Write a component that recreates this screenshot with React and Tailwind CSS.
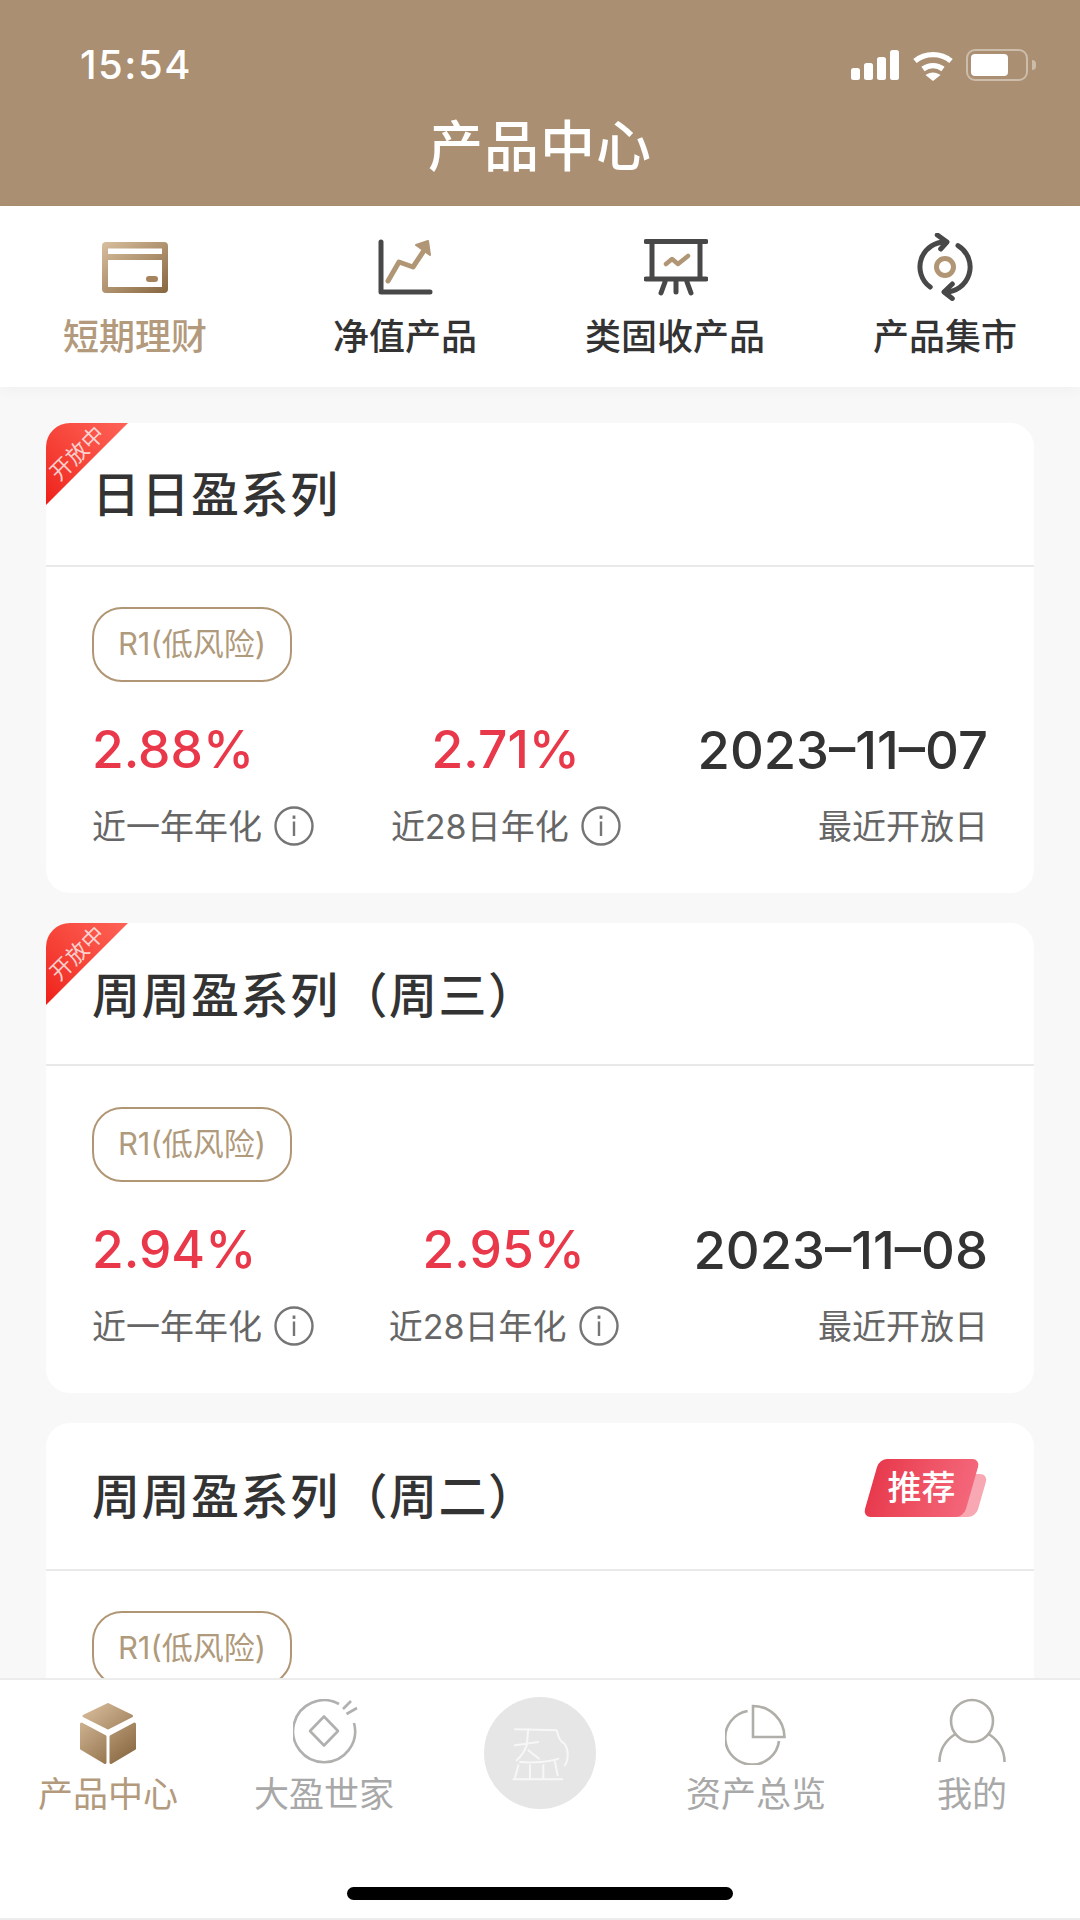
import React from "react";

const FONT = 'Inter, "Noto Sans CJK SC", sans-serif';

const WalletIcon = () => (
  <svg width="66" height="51" viewBox="0 0 66 51">
    <defs>
      <linearGradient id="gold1" x1="0" y1="0" x2="1" y2="1">
        <stop offset="0" stopColor="#d9bf9f" />
        <stop offset="1" stopColor="#86663f" />
      </linearGradient>
    </defs>
    <path
      fillRule="evenodd"
      fill="url(#gold1)"
      d="M4 0H62A4 4 0 0 1 66 4V47A4 4 0 0 1 62 51H4A4 4 0 0 1 0 47V4A4 4 0 0 1 4 0ZM6 6.5V12H60V6.5ZM6 18V45H60V18Z"
    />
    <rect x="44" y="34" width="12" height="6" rx="3" fill="#a5835c" />
  </svg>
);

const ChartIcon = () => (
  <svg width="56" height="56" viewBox="0 0 56 56" fill="none" strokeLinecap="round" strokeLinejoin="round">
    <path d="M4 3V53H53" stroke="#484848" strokeWidth="5" />
    <path d="M11 42L22 23L36 28L46 13" stroke="#b09674" strokeWidth="5" />
    <path d="M39 6L51 2L53 16Z" fill="#b09674" stroke="#b09674" strokeWidth="2" />
  </svg>
);

const BoardIcon = () => (
  <svg className="ml-[2px]" width="64" height="58" viewBox="0 0 64 58" fill="none" strokeLinecap="round" strokeLinejoin="round">
    <path d="M2 3.5H62M2 41H62M8 4V41M56 4V41M21 44L17 55M32 44V54M43 44L47 55" stroke="#484848" strokeWidth="5" />
    <path d="M22 26L28 21L34 26L44 18" stroke="#b09674" strokeWidth="4.5" />
  </svg>
);

const CycleIcon = () => (
  <svg width="56" height="68" viewBox="0 0 56 68" fill="none" strokeLinecap="round" strokeLinejoin="round">
    <path
      d="M13.2 54.1A25 25 0 0 1 30 9M20.3 2L30 9L23.7 16M41 12.6A25 25 0 0 1 27 59M35.3 51L27 59L35.3 65.5"
      stroke="#484848"
      strokeWidth="5"
    />
    <circle cx="28" cy="34" r="8.5" stroke="#b09674" strokeWidth="5" />
  </svg>
);

const InfoIcon = () => (
  <svg width="40" height="40" viewBox="0 0 40 40" fill="none">
    <circle cx="20" cy="20" r="18.5" stroke="#757575" strokeWidth="2.4" />
    <rect x="18.6" y="9.5" width="2.8" height="3.4" fill="#757575" />
    <rect x="18.8" y="15.5" width="2.4" height="14.5" fill="#757575" />
  </svg>
);

const BoxIcon = () => (
  <svg width="56" height="63" viewBox="0 0 56 63">
    <defs>
      <linearGradient id="gold2" gradientUnits="userSpaceOnUse" x1="4" y1="4" x2="52" y2="60">
        <stop offset="0" stopColor="#d8bc9b" />
        <stop offset="1" stopColor="#86663f" />
      </linearGradient>
    </defs>
    <g fill="url(#gold2)" stroke="url(#gold2)" strokeWidth="3" strokeLinejoin="round">
      <path d="M28 2.5L51.5 14L28 26L4 14Z" />
      <path d="M1.5 22L25 34.5V60.5L1.5 46.5Z" />
      <path d="M54.5 22L31 34.5V60.5L54.5 46.5Z" />
    </g>
  </svg>
);

const CoinIcon = () => (
  <svg className="ml-[4px]" width="66" height="66" viewBox="0 0 66 66" fill="none" stroke="#b0b0ae" strokeWidth="2.6" strokeLinejoin="round">
    <path d="M46 5A31 31 0 1 0 61 24" />
    <path d="M31 17.5L45 32L31 46.5L17 32Z" />
    <path d="M50 10L58 2M53.5 15L64 9" />
  </svg>
);

const PieIcon = () => (
  <svg width="62" height="62" viewBox="0 0 62 62" fill="none" stroke="#b0aea8" strokeWidth="2.6">
    <path d="M28 3V34H59.5A31.5 31.5 0 0 0 28 3Z" />
    <path d="M22.6 8A27 27 0 1 0 54 38" />
  </svg>
);

const PersonIcon = () => (
  <svg width="68" height="68" viewBox="0 0 68 68" fill="none" stroke="#b0aea8" strokeWidth="2.6">
    <circle cx="34" cy="24" r="21" />
    <path d="M1.5 65C1.5 52 8 43 17.5 37M66.5 65C66.5 52 60 43 50.5 37" />
  </svg>
);

// brand mark in the middle of the tab bar
const LogoMark = () => (
  <svg width="112" height="112" viewBox="27 20 336 336" fill="none" stroke="#f7f7f7" strokeWidth="6" strokeLinecap="round" strokeLinejoin="round">
    <circle cx="195" cy="188" r="168" fill="#e6e6e6" stroke="none" />
    <path d="M120 117L245 120C250 135 250 150 268 160C280 175 282 205 270 225" />
    <path d="M120 165L190 155M160 115L155 165C148 185 138 198 125 210M160 180L192 205" />
    <path d="M135 215C175 218 225 215 250 205M130 225L120 262M165 225V265M205 225V265M240 215L248 255M115 267H262" />
  </svg>
);

const StatusIcons = () => (
  <div className="flex items-center">
    <svg width="48" height="30" viewBox="0 0 48 30" fill="#fff">
      <rect x="0" y="18" width="9" height="12" rx="2.5" />
      <rect x="13" y="13" width="9" height="17" rx="2.5" />
      <rect x="26" y="7" width="9" height="23" rx="2.5" />
      <rect x="39" y="0" width="9" height="30" rx="2.5" />
    </svg>
    <svg className="ml-[13px]" width="42" height="31" viewBox="0 0 42 31" fill="none" stroke="#fff" strokeWidth="5.4">
      <path d="M3 11C13 2.5 29 2.5 39 11" />
      <path d="M11 19C17 14.5 25 14.5 31 19" />
      <path d="M21 31L13.5 25C18 21.5 24 21.5 28.5 25Z" fill="#fff" stroke="none" />
    </svg>
    <div className="ml-[12px] flex items-center">
      <div className="w-[62px] h-[32px] rounded-[9px] border-2 border-white/40 p-[3px]">
        <div className="w-[37px] h-full rounded-[4px] bg-white" />
      </div>
      <div className="ml-[4px] w-[4px] h-[10px] rounded-r-full bg-white/40" />
    </div>
  </div>
);

const tabs = [
  { label: "短期理财", icon: <WalletIcon />, active: true },
  { label: "净值产品", icon: <ChartIcon /> },
  { label: "类固收产品", icon: <BoardIcon /> },
  { label: "产品集市", icon: <CycleIcon /> },
];

const cards = [
  { title: "日日盈系列", open: true, rate1: "2.88%", rate2: "2.71%", date: "2023–11–07", headerH: "h-[142px] pt-[1px]", bodyH: "h-[326px] pt-[40px]" },
  { title: "周周盈系列（周三）", open: true, rate1: "2.94%", rate2: "2.95%", date: "2023–11–08", headerH: "h-[141px] pt-[4px]", bodyH: "h-[327px] pt-[41px]" },
  { title: "周周盈系列（周二）", hot: true, headerH: "h-[146px] pt-[2px]", bodyH: "h-[325px] pt-[40px]" },
];

const navItems = [
  { label: "产品中心", icon: <BoxIcon />, active: true },
  { label: "大盈世家", icon: <CoinIcon /> },
  { center: true },
  { label: "资产总览", icon: <PieIcon /> },
  { label: "我的", icon: <PersonIcon /> },
];

const Card = ({ card }) => (
  <div className="relative shrink-0 bg-white rounded-[24px] overflow-hidden">
    {card.open && (
      <>
        <div className="absolute left-0 top-0 w-[82px] h-[82px] bg-gradient-to-tr from-[#ee1c17] to-[#ff6257] [clip-path:polygon(0_0,100%_0,0_100%)]" />
        <span className="absolute left-[-2px] top-[20px] w-[66px] text-center text-[22px] leading-[20px] whitespace-nowrap text-white/75 -rotate-45">
          开放中
        </span>
      </>
    )}
    <div className={`${card.headerH} pl-[46px] pr-[46px] flex items-center justify-between`}>
      <span className="text-[48px] leading-[60px] tracking-[1.5px] font-medium text-[#333]">{card.title}</span>
      {card.hot && (
        <div className="relative w-[124px] h-[58px] mt-[-19px]">
          <div className="absolute right-[6px] bottom-0 w-[62px] h-[43px] rounded-[8px] bg-[#f8a8b3] -skew-x-[16deg]" />
          <div className="absolute left-[7px] top-0 w-[101px] h-[58px] rounded-[8px] bg-gradient-to-r from-[#e8394d] to-[#f4667a] -skew-x-[16deg]" />
          <span className="absolute left-[7px] top-0 w-[101px] h-[58px] flex items-center justify-center text-[34px] font-medium text-white">
            推荐
          </span>
        </div>
      )}
    </div>
    <div className="h-[2px] bg-[#e9e9e9]" />
    <div className={`${card.bodyH} pl-[46px] pr-[46px]`}>
      <div className="w-[200px] h-[75px] rounded-[30px] border-2 border-[#b09674] flex items-center justify-center text-[31px] text-[#b09a7c]">
        R1(低风险)
      </div>
      {card.date && (
        <div className="mt-[38px] flex justify-between">
          <div>
            <div className="h-[60px] flex items-center text-[51.5px] font-medium text-[#e8384a]">{card.rate1}</div>
            <div className="mt-[21px] h-[50px] flex items-center text-[34px] text-[#666]">
              近一年年化
              <span className="ml-[12px]"><InfoIcon /></span>
            </div>
          </div>
          <div>
            <div className="h-[60px] flex items-center justify-center text-[51.5px] font-medium text-[#e8384a]">{card.rate2}</div>
            <div className="mt-[21px] h-[50px] flex items-center text-[34px] text-[#666]">
              近28日年化
              <span className="ml-[12px]"><InfoIcon /></span>
            </div>
          </div>
          <div className="text-right">
            <div className="h-[60px] flex items-center justify-end text-[52.5px] font-medium text-[#333]">{card.date}</div>
            <div className="mt-[21px] h-[50px] flex items-center justify-end text-[34px] text-[#666]">最近开放日</div>
          </div>
        </div>
      )}
    </div>
  </div>
);

export default function App() {
  return (
    <div className="w-[1080px] h-[1920px] flex flex-col bg-[#f8f8f8] overflow-hidden" style={{ fontFamily: FONT }}>
      <div className="h-[206px] shrink-0 bg-[#aa8f72] pt-[40px] text-white">
        <div className="h-[50px] pl-[80px] pr-[44px] flex items-center justify-between">
          <span className="text-[40px] font-medium tracking-[1.5px]">15:54</span>
          <StatusIcons />
        </div>
        <div className="h-[110px] pt-[2px] flex items-center justify-center text-[55px] font-medium tracking-[1px]">产品中心</div>
      </div>

      <div className="h-[181px] shrink-0 bg-white grid grid-cols-4 pt-[26px] shadow-[0_4px_14px_rgba(0,0,0,0.03)] relative">
        {tabs.map((tab) => (
          <div key={tab.label} className="flex flex-col items-center">
            <div className="h-[70px] flex items-center justify-center">{tab.icon}</div>
            <div className={`mt-[10px] h-[50px] flex items-center text-[36px] font-medium ${tab.active ? "text-[#b39a7c]" : "text-[#333]"}`}>
              {tab.label}
            </div>
          </div>
        ))}
      </div>

      <div className="flex-1 min-h-0 overflow-hidden px-[46px] pt-[36px] flex flex-col gap-[30px]">
        {cards.map((card) => (
          <Card key={card.title} card={card} />
        ))}
      </div>

      <div className="h-[242px] shrink-0 bg-white border-t-2 border-b-2 border-[#ececec] flex flex-col relative">
        <div className="grid grid-cols-5">
          {navItems.map((item, i) =>
            item.center ? (
              <div key={i} className="flex justify-center pt-[17px]">
                <LogoMark />
              </div>
            ) : (
              <div key={i} className="flex flex-col items-center">
                <div className="h-[85px] flex items-end justify-center">{item.icon}</div>
                <div className={`h-[58px] flex items-center text-[35px] ${item.active ? "text-[#b39a7c]" : "text-[#a8a8a8]"}`}>
                  {item.label}
                </div>
              </div>
            )
          )}
        </div>
        <div className="absolute left-[347px] bottom-[18px] w-[386px] h-[13px] rounded-full bg-black" />
      </div>
    </div>
  );
}
